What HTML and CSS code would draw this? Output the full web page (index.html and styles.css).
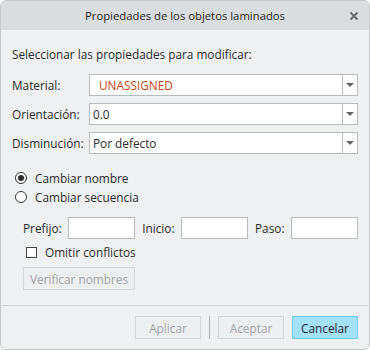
FILE: index.html
```html
<!DOCTYPE html>
<html lang="es">
<head>
<meta charset="utf-8">
<link rel="stylesheet" href="styles.css">
</head>
<body>
<div class="dialog">
  <div class="titlebar">
    <span class="title">Propiedades de los objetos laminados</span>
    <svg class="close" width="10" height="10" viewBox="0 0 10 10"><path d="M1.5 1.5 L8.5 8.5 M8.5 1.5 L1.5 8.5" stroke="#6b6b6b" stroke-width="2"/></svg>
  </div>
  <div class="content">
    <div class="intro">Seleccionar las propiedades para modificar:</div>
    <div class="fields">
      <div class="field">
        <span class="label">Material:</span>
        <div class="combo"><span class="value red">UNASSIGNED</span><span class="drop"><i></i></span></div>
      </div>
      <div class="field">
        <span class="label">Orientación:</span>
        <div class="combo"><span class="value">0.0</span><span class="drop"><i></i></span></div>
      </div>
      <div class="field">
        <span class="label">Disminución:</span>
        <div class="combo"><span class="value">Por defecto</span><span class="drop"><i></i></span></div>
      </div>
    </div>
    <div class="radios">
      <label class="radio"><span class="circle checked"></span>Cambiar nombre</label>
      <label class="radio"><span class="circle"></span>Cambiar secuencia</label>
    </div>
    <div class="sub">
      <div class="inputs">
        <span class="ilabel">Prefijo:</span><span class="input"></span>
        <span class="ilabel">Inicio:</span><span class="input"></span>
        <span class="ilabel">Paso:</span><span class="input"></span>
      </div>
      <label class="check"><span class="box"></span>Omitir conflictos</label>
      <div class="btn verify">Verificar nombres</div>
    </div>
  </div>
  <div class="footer">
    <div class="btn dis">Aplicar</div>
    <span class="vsep"></span>
    <div class="btn dis">Aceptar</div>
    <div class="btn primary">Cancelar</div>
  </div>
</div>
</body>
</html>
```
FILE: styles.css
```css
* { box-sizing: border-box; }
html, body { margin: 0; padding: 0; background: #ffffff; }
body {
  font-family: "Open Sans", "Noto Sans", sans-serif;
  font-size: 11.8px;
  color: #2b2b2b;
}
.dialog {
  width: 370px;
  height: 350px;
  border: 1px solid #c6c8ca;
  border-radius: 6px;
  background: #eff0f2;
  overflow: hidden;
  display: flex;
  flex-direction: column;
}
.titlebar {
  height: 29px;
  background: #dadddf;
  display: flex;
  align-items: center;
  justify-content: center;
  position: relative;
  flex: none;
}
.title { font-size: 11.3px; color: #262626; }
.close { position: absolute; right: 10px; top: 10px; }
.content { padding: 0 11px 0 11px; flex: 1; }
.intro { margin-top: 15px; height: 18px; line-height: 18px; }
.fields { margin-top: 11px; display: flex; flex-direction: column; gap: 7px; }
.field { display: flex; align-items: center; height: 22px; }
.label { width: 77px; flex: none; }
.combo {
  flex: 1;
  height: 22px;
  border: 1px solid #b8babc;
  background: #ffffff;
  display: flex;
  align-items: center;
}
.value { flex: 1; padding-left: 9px; }
.field:nth-child(n+2) .value { padding-left: 3px; }
.red { color: #c8410b; }
.drop {
  width: 15px;
  height: 20px;
  border-left: 1px solid #b8babc;
  display: flex;
  align-items: center;
  justify-content: center;
}
.drop i {
  width: 0; height: 0;
  border-left: 4px solid transparent;
  border-right: 4px solid transparent;
  border-top: 4px solid #666;
}
.radios { margin-top: 17px; display: flex; flex-direction: column; gap: 6px; }
.radio { display: flex; align-items: center; height: 13px; padding-left: 3px; }
.circle {
  width: 12px; height: 12px;
  border: 1px solid #333;
  border-radius: 50%;
  background: #fff;
  margin-right: 8px;
  display: flex; align-items: center; justify-content: center;
}
.circle.checked::after {
  content: ""; width: 6px; height: 6px; border-radius: 50%; background: #2b2b2b;
}
.sub { padding-left: 11px; }
.inputs { margin-top: 14px; display: flex; align-items: center; height: 22px; }
.ilabel { margin-right: 6px; }
.input {
  width: 68px; height: 22px; border: 1px solid #b8babc; background: #fff; margin-right: 7px;
}
.inputs .input:last-child { margin-right: 0; }
.check { display: flex; align-items: center; height: 12px; margin-top: 7px; padding-left: 3px; }
.box { width: 11px; height: 11px; border: 1px solid #444; background: #fff; margin-right: 8px; }
.btn {
  height: 23px;
  display: flex; align-items: center; justify-content: center;
  border: 1px solid #d3d5d7;
  background: #eceef0;
}
.verify { width: 112px; margin-top: 9px; color: #a3a5a7; }
.footer {
  flex: none;
  height: 44px;
  border-top: 1px solid #d0d2d4;
  margin: 0 1px;
  display: flex;
  align-items: flex-start;
  justify-content: flex-end;
  padding: 10px 10px 0 0;
}
.footer .btn { width: 66px; }
.dis { color: #a3a5a7; }
.vsep { width: 1px; height: 23px; background: #b0b2b4; margin: 0 8px; }
.primary { background: #a3e1fc; border-color: #6fcaf2; color: #262626; margin-left: 8px; }
```
